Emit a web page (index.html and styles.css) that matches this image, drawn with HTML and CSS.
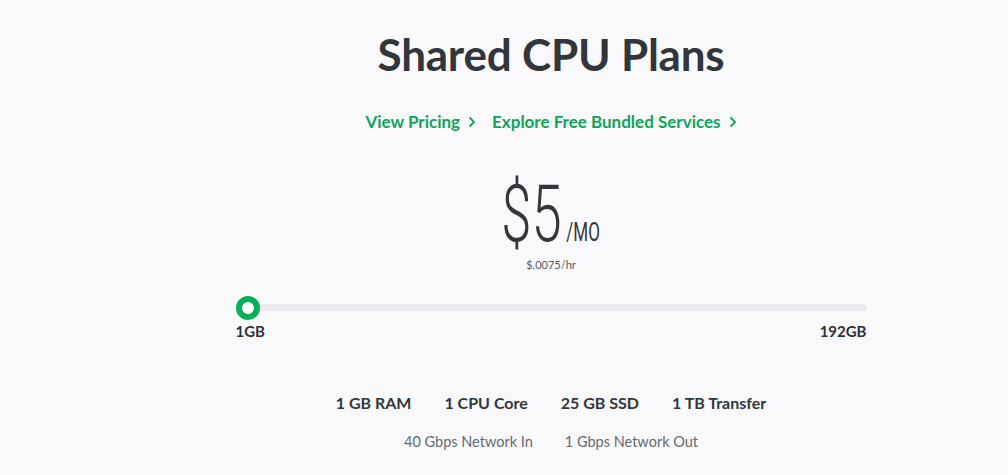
FILE: index.html
```html
<!DOCTYPE html>
<html>
<head>
<meta charset="utf-8">
<link rel="stylesheet" href="styles.css">
</head>
<body>
<main class="page">
  <h1 class="title">Shared CPU Plans</h1>
  <nav class="links">
    <a class="link" href="#">View Pricing <svg class="chev" viewBox="0 0 8 12" width="8" height="12"><path d="M1.5 1.5 L6 6 L1.5 10.5" fill="none" stroke="currentColor" stroke-width="1.8"/></svg></a>
    <a class="link" href="#">Explore Free Bundled Services <svg class="chev" viewBox="0 0 8 12" width="8" height="12"><path d="M1.5 1.5 L6 6 L1.5 10.5" fill="none" stroke="currentColor" stroke-width="1.8"/></svg></a>
  </nav>
  <div class="price">
    <span class="amount"><span class="num">$5</span><span class="per">/MO</span></span>
    <div class="hourly">$.0075/hr</div>
  </div>
  <div class="slider">
    <div class="track"><span class="thumb"></span></div>
    <div class="labels"><span>1GB</span><span>192GB</span></div>
  </div>
  <ul class="specs">
    <li>1 GB RAM</li>
    <li>1 CPU Core</li>
    <li>25 GB SSD</li>
    <li>1 TB Transfer</li>
  </ul>
  <ul class="net">
    <li>40 Gbps Network In</li>
    <li>1 Gbps Network Out</li>
  </ul>
</main>
</body>
</html>
```
FILE: styles.css
```css
html, body {
  margin: 0;
  padding: 0;
  background: #f9f9fb;
}
body {
  font-family: "Lato", "Open Sans", sans-serif;
  color: #32363c;
  width: 1008px;
  height: 475px;
  overflow: hidden;
}
.page {
  padding-left: 94px;
  display: flex;
  flex-direction: column;
  align-items: center;
}
.title {
  margin: 27px 0 0;
  font-size: 44px;
  font-weight: 700;
  line-height: 54px;
  color: #32363c;
  letter-spacing: -0.2px;
}
.links {
  display: flex;
  gap: 16px;
  margin-top: 29px;
}
.link {
  color: #12a35a;
  text-decoration: none;
  font-size: 17px;
  font-weight: 700;
  line-height: 24px;
  display: flex;
  align-items: center;
  gap: 8px;
}
.chev { display: block; }
.price {
  margin-top: 47px;
  display: flex;
  flex-direction: column;
  align-items: center;
}
.amount {
  display: flex;
  align-items: baseline;
  transform: scaleX(0.68);
  transform-origin: center;
  color: #33363b;
}
.num {
  font-family: "Roboto", sans-serif;
  font-weight: 300;
  font-size: 80px;
  line-height: 66px;
}
.per {
  font-family: "Roboto", sans-serif;
  font-weight: 400;
  font-size: 25px;
  line-height: 30px;
  margin-left: 7px;
}
.hourly {
  font-size: 11px;
  color: #555a60;
  margin-top: 10px;
  line-height: 14px;
}
.slider {
  width: 631px;
  margin-top: 32px;
}
.track {
  position: relative;
  height: 7px;
  border-radius: 4px;
  background: #e9e9ef;
}
.thumb {
  position: absolute;
  left: 0;
  top: -8px;
  width: 12px;
  height: 12px;
  border: 6px solid #02b159;
  border-radius: 50%;
  background: #fff;
  box-sizing: content-box;
}
.labels {
  display: flex;
  justify-content: space-between;
  margin-top: 10px;
  font-size: 15px;
  font-weight: 700;
  color: #2d3035;
  line-height: 20px;
}
.specs, .net {
  list-style: none;
  margin: 0;
  padding: 0;
  display: flex;
}
.specs {
  margin-top: 51px;
  gap: 33px;
  font-size: 16px;
  font-weight: 700;
  color: #32363c;
  line-height: 22px;
}
.net {
  margin-top: 18px;
  gap: 32px;
  font-size: 14.5px;
  color: #666a70;
  line-height: 20px;
}
```
